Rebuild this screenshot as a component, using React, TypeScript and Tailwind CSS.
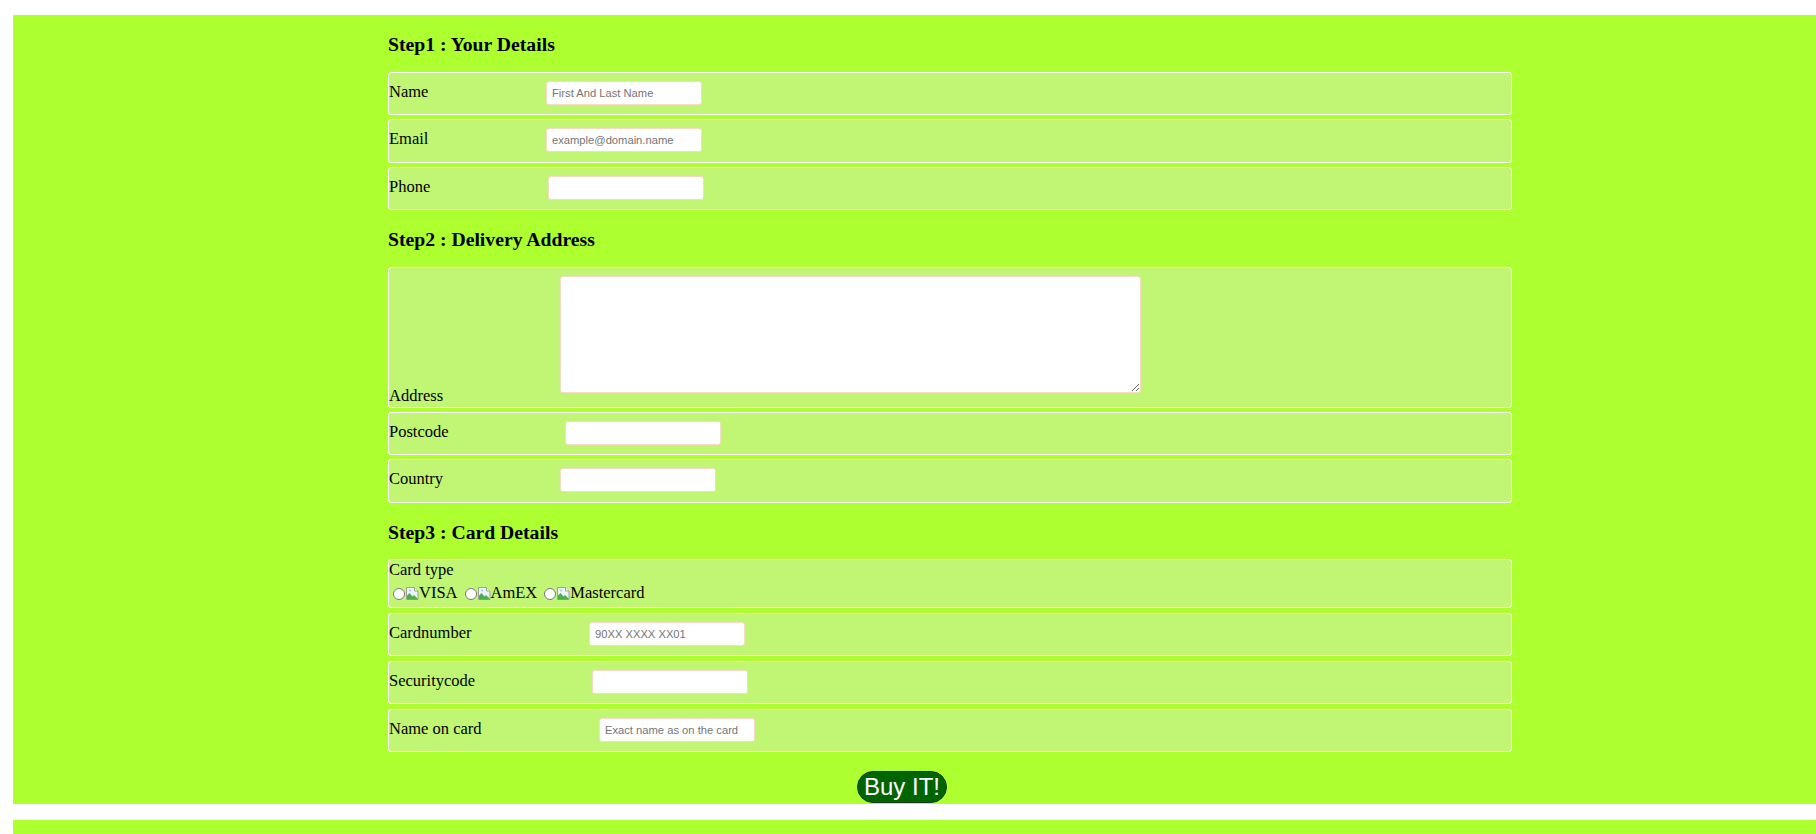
import { ReactNode } from "react";

const BrokenImg = () => (
  <svg width="13" height="13" viewBox="0 0 13 13" className="shrink-0">
    <path d="M0.5 0.5h8l3.5 3.5v8.5h-11.5z" fill="#eef3f7" stroke="#a0a0a0" />
    <path d="M8.5 0.5v3.5h3.5" fill="#ffffff" stroke="#a0a0a0" />
    <path d="M1 12.5V8.5l2.5-2.5 3 3.5 1.5-1.5 3.5 3.5v1z" fill="#4cae4f" />
    <circle cx="4" cy="3.5" r="1" fill="#8ec9f0" />
  </svg>
);

type RowProps = {
  label: string;
  labelW: string;
  className?: string;
  children?: ReactNode;
};

const Row = ({ label, labelW, className, children }: RowProps) => (
  <div
    className={`flex items-baseline border border-white rounded-[3px] bg-[#c1f574] pt-[8px] ${className ?? ""}`}
  >
    <span className={`${labelW} shrink-0 text-[16.5px] leading-[18.5px]`}>{label}</span>
    {children}
  </div>
);

const Field = ({ placeholder }: { placeholder?: string }) => (
  <input
    type="text"
    placeholder={placeholder}
    className="w-[156px] h-[24px] bg-white border border-[#f7d9c5] rounded-[3px] pl-[5px] text-[11.2px] font-['Liberation_Sans',Arial,sans-serif] text-black placeholder:text-[#757575] outline-none"
  />
);

const Radio = ({ label, first }: { label: string; first?: boolean }) => (
  <span className={`flex items-center ${first ? "ml-[4px]" : "ml-[7px]"}`}>
    <input type="radio" name="card" className="w-[12px] h-[12px] mr-[1px]" />
    <BrokenImg />
    <span className="text-[16.5px] leading-[18.5px]">{label}</span>
  </span>
);

const Heading = ({ children, className }: { children: ReactNode; className?: string }) => (
  <h3 className={`ml-[375px] h-[22px] leading-[22px] text-[19.7px] font-bold ${className ?? ""}`}>
    {children}
  </h3>
);

export default function App() {
  return (
    <div className="min-h-[834px] bg-white pt-[15px] pl-[13px] font-['Liberation_Serif','Times_New_Roman',serif] text-black">
      <div className="bg-[#adff2f] h-[789px] overflow-hidden">
        <div className="w-[1778px] pt-[18px]">
          {/* Step 1 */}
          <Heading>Step1 : Your Details</Heading>
          <div className="ml-[375px] w-[1124px] mt-[16.65px] flex flex-col gap-[4px]">
            <Row label="Name" labelW="w-[157px]" className="h-[43.5px]">
              <Field placeholder="First And Last Name" />
            </Row>
            <Row label="Email" labelW="w-[157px]" className="h-[43.5px]">
              <Field placeholder="example@domain.name" />
            </Row>
            <Row label="Phone" labelW="w-[159px]" className="h-[43.5px]">
              <Field />
            </Row>
          </div>

          {/* Step 2 */}
          <Heading className="mt-[17.85px]">Step2 : Delivery Address</Heading>
          <div className="ml-[375px] w-[1124px] mt-[17.25px] flex flex-col gap-[4px]">
            <div className="flex items-end h-[140.5px] border border-white rounded-[3px] bg-[#c1f574] pt-[7.7px] pb-[1px]">
              <span className="w-[171px] shrink-0 text-[16.5px] leading-[18.5px]">Address</span>
              <textarea className="self-start w-[581px] h-[117px] bg-white border border-[#f7d9c5] rounded-[3px] outline-none" />
            </div>
            <Row label="Postcode" labelW="w-[176px]" className="h-[43.5px]">
              <Field />
            </Row>
            <Row label="Country" labelW="w-[171px]" className="h-[43.5px]">
              <Field />
            </Row>
          </div>

          {/* Step 3 */}
          <Heading className="mt-[17.85px]">Step3 : Card Details</Heading>
          <div className="ml-[375px] w-[1124px] mt-[16.65px] flex flex-col gap-[4.4px]">
            <div className="h-[49px] border border-white rounded-[3px] bg-[#c1f574] pt-[0.4px]">
              <p className="text-[16.5px] leading-[18.5px]">Card type</p>
              <div className="flex items-center h-[22px] mt-[3.6px]">
                <Radio label="VISA" first />
                <Radio label="AmEX" />
                <Radio label="Mastercard" />
              </div>
            </div>
            <div className="flex flex-col gap-[5px]">
              <Row label="Cardnumber" labelW="w-[200px]" className="h-[43px]">
                <Field placeholder="90XX XXXX XX01" />
              </Row>
              <Row label="Securitycode" labelW="w-[203px]" className="h-[43px]">
                <Field />
              </Row>
              <Row label="Name on card" labelW="w-[210px]" className="h-[43px]">
                <Field placeholder="Exact name as on the card" />
              </Row>
            </div>
          </div>

          <div className="flex justify-center mt-[19.3px]">
            <button className="h-[32px] px-[6px] rounded-full bg-[#006400] border border-[#1c3a1c] text-white text-[24px] leading-[28px] font-['Liberation_Sans',Arial,sans-serif]">
              Buy IT!
            </button>
          </div>
        </div>
      </div>
      <div className="mt-[16px] h-[14px] bg-[#adff2f]" />
    </div>
  );
}
